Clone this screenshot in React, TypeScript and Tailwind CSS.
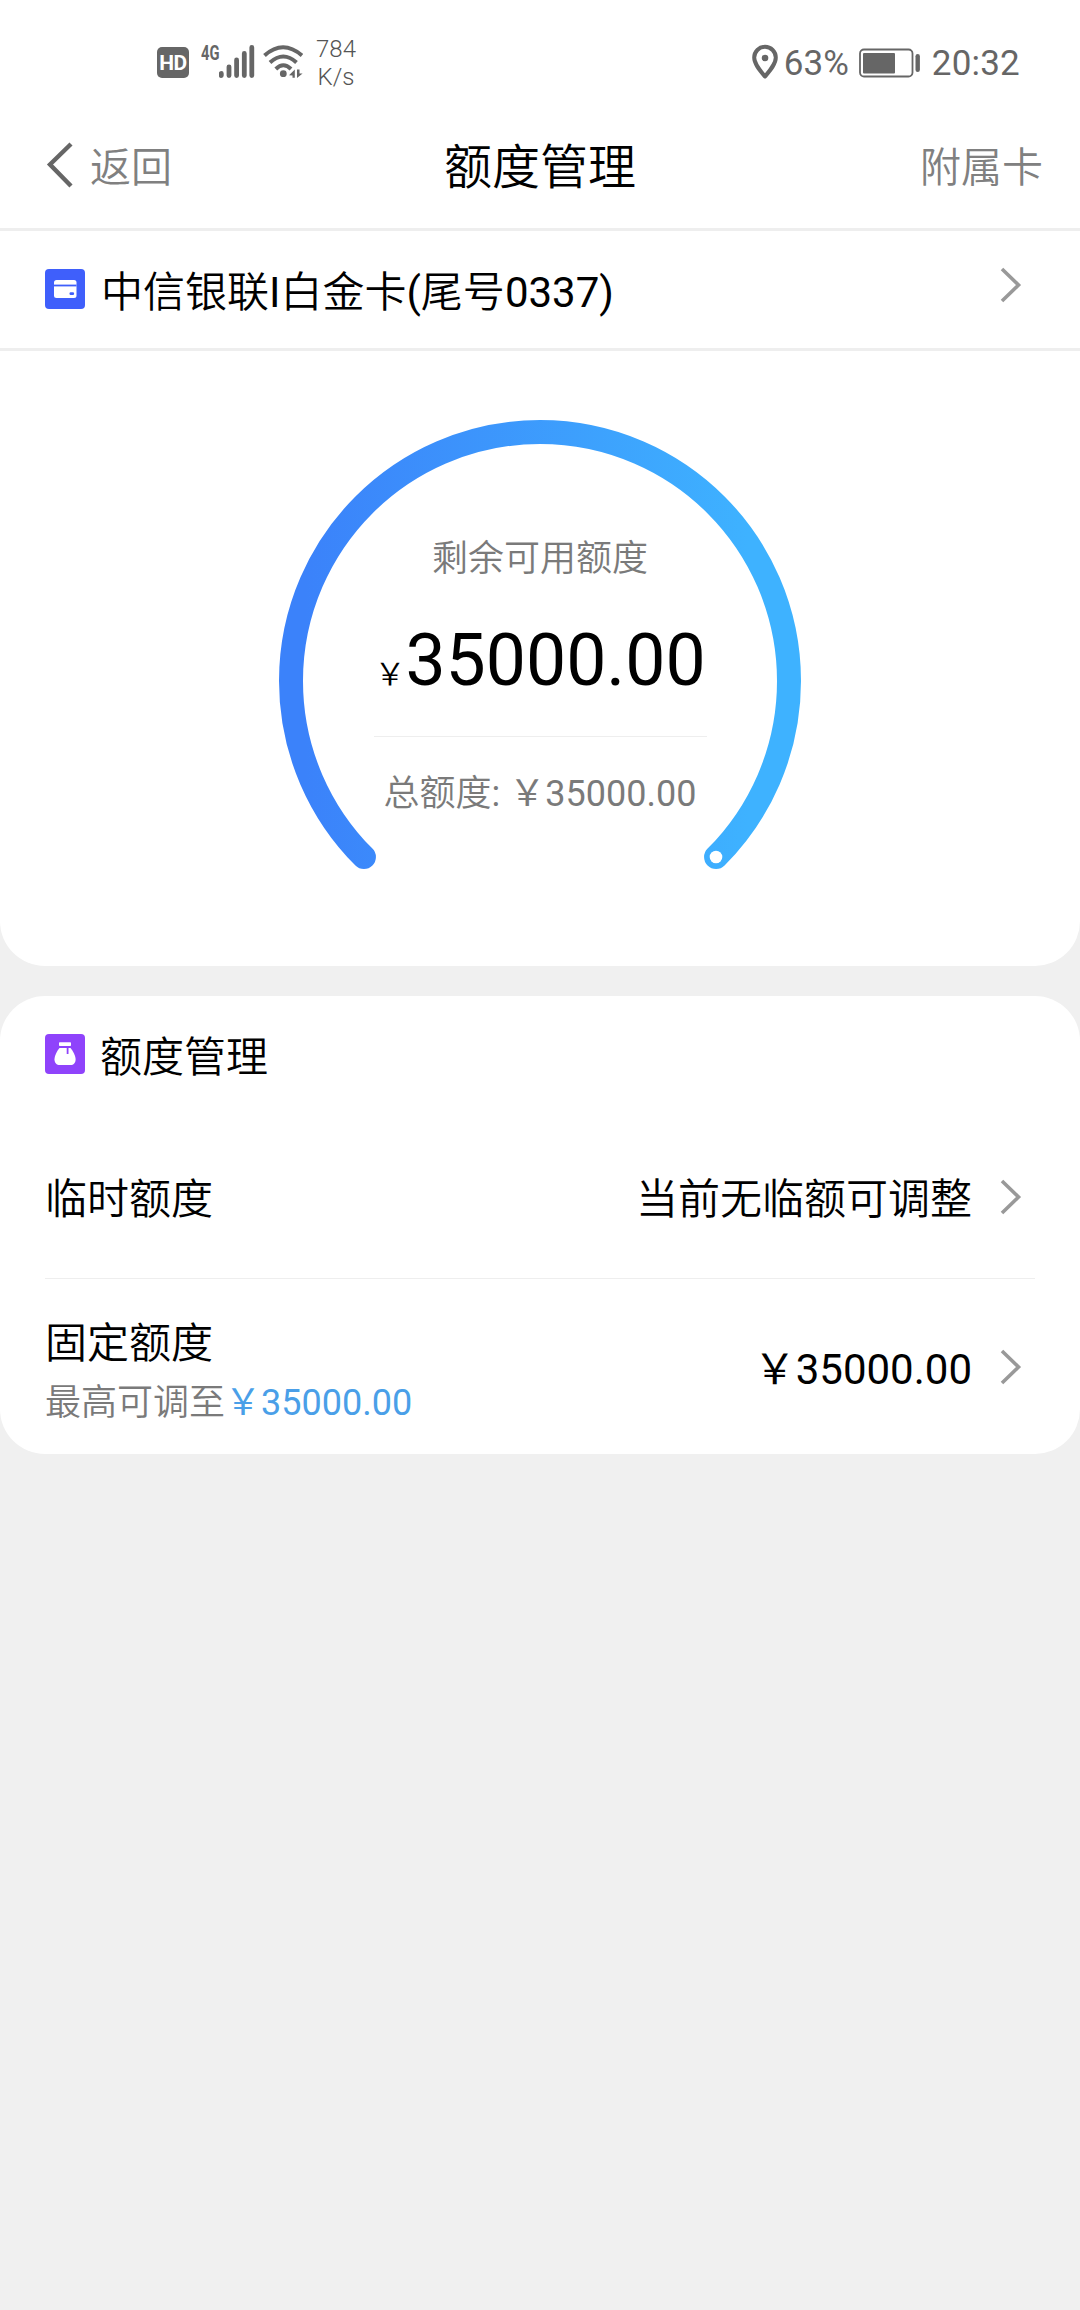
import React from "react";

const YEN = "\uffe5";

const ChevronRight = () => (
  <svg width="22" height="36" viewBox="0 0 22 36" fill="none" className="shrink-0">
    <path d="M2 2L18.5 18L2 34" stroke="#999999" strokeWidth="3.6" />
  </svg>
);

const StatusBar = () => {
  return (
    <div className="h-[104px] flex items-start text-[#666666]">
      {/* Network */}
      <div className="flex ml-[157px] mt-[44px]">
        <div className="mt-[3px] w-8 h-[31px] rounded-[5px] bg-[#666666] text-white text-[21px] leading-[32px] font-bold text-center tracking-[-0.5px]">
          HD
        </div>
        <div className="ml-3 w-[18px] text-[21px] leading-[18px] font-bold">
          <span className="inline-block origin-left scale-x-[0.7]">4G</span>
        </div>
        <svg width="36" height="36" viewBox="0 0 36 36" className="shrink-0">
          <g stroke="#666666" strokeWidth="4.8" strokeLinecap="round">
            <path d="M2.3 29.5V31.6M10 22.8V31.6M17.6 16V31.6M25.3 9.5V31.6M32.8 3.5V31.6" />
          </g>
        </svg>
        <svg width="40" height="36" viewBox="0 0 40 36" fill="none" className="ml-2 shrink-0">
          <g stroke="#666666" strokeWidth="4">
            <path d="M1.5 11.5Q20 -5 39 11.5" />
            <path d="M7 18.5Q20.3 6.5 33.5 18.5" />
            <path d="M12.8 25Q20.3 17.5 28 25" />
          </g>
          <circle cx="20.3" cy="29.7" r="3.4" fill="#666666" />
          <path d="M31.8 25.5V33.8H29.5V31.5L26 31.2Z M34 25.5V34L39.6 29.5H36.5V25.5Z" fill="#666666" />
        </svg>
      </div>
      <div className="ml-[13px] mt-[35px] text-[24px] leading-7 text-center font-light text-[#555555]">
        <div>784</div>
        <div>K/s</div>
      </div>

      {/* Location, battery, clock */}
      <div className="ml-auto mr-[60px] mt-[44px] flex items-center h-10 text-[35px] leading-10">
        <svg width="28" height="36" viewBox="0 0 28 36" fill="none" className="-mt-[4px]">
          <path
            d="M14 32.5C9 26.5 3.2 20 3.2 13.6A10.8 10.8 0 0 1 24.8 13.6C24.8 20 19 26.5 14 32.5Z"
            stroke="#666666"
            strokeWidth="4"
            strokeLinejoin="round"
          />
          <circle cx="14" cy="14" r="3.3" fill="#666666" />
        </svg>
        <span className="ml-[5px]">63%</span>
        <svg width="62" height="30" viewBox="0 0 62 30" fill="none" className="ml-[10px] -mt-[2px]">
          <rect x="1" y="1.5" width="52.5" height="27" rx="4" stroke="#666666" strokeWidth="1.8" />
          <rect x="4" y="5" width="32" height="20.5" rx="1" fill="#666666" />
          <rect x="56.5" y="6" width="4.4" height="18" rx="2.2" fill="#666666" />
        </svg>
        <span className="ml-[11px] tracking-[0.2px]">20:32</span>
      </div>
    </div>
  );
};

const CardIcon = () => (
  <svg width="40" height="40" viewBox="0 0 40 40" className="-mt-[2px]">
    <rect width="40" height="40" rx="4" fill="#3f5ffb" />
    <rect x="9" y="11" width="22.5" height="18" rx="2.5" fill="#ffffff" />
    <rect x="9" y="15.6" width="22.5" height="1.8" fill="#3f5ffb" />
    <rect x="24.5" y="23.2" width="4.6" height="2.8" rx="1.2" fill="#3f5ffb" />
  </svg>
);

const PurseIcon = () => (
  <svg width="40" height="40" viewBox="0 0 40 40">
    <rect width="40" height="40" rx="4" fill="#8f43fb" />
    <rect x="14" y="8.2" width="12" height="3.8" rx="0.8" fill="#ffffff" />
    <path
      d="M14.5 14H25.5C28 17 30.6 21.5 30.6 25.5C30.6 29 28.5 31 25.5 31H14.8C11.6 31 9.5 29 9.5 25.5C9.5 21.5 12 17 14.5 14Z"
      fill="#ffffff"
    />
    <path d="M22.6 13V20" stroke="#8f43fb" strokeWidth="1.8" />
  </svg>
);

const Gauge = () => {
  return (
    <div className="relative w-[522px] h-[456px] mx-auto">
      <svg width="522" height="456" viewBox="0 0 522 456" fill="none">
        <defs>
          <linearGradient id="ring" gradientUnits="userSpaceOnUse" x1="0" y1="0" x2="522" y2="0">
            <stop offset="0.05" stopColor="#3b82fa" />
            <stop offset="0.9" stopColor="#3eb2ff" />
          </linearGradient>
        </defs>
        <path
          d="M84.93 437.07A249 249 0 1 1 437.07 437.07"
          stroke="url(#ring)"
          strokeWidth="24"
          strokeLinecap="round"
        />
        <circle cx="437" cy="437" r="6.3" fill="#ffffff" />
      </svg>

      {/* Amounts inside the ring */}
      <div className="absolute inset-0 flex flex-col items-center">
        <div className="mt-[119px] text-[36px] leading-10 text-[#7a7a7a] font-[350]">剩余可用额度</div>
        <div className="mt-[42px] h-20 flex items-baseline text-black">
          <span className="text-[31px] font-[350]">{YEN}</span>
          <span className="text-[71.5px] leading-20">35000.00</span>
        </div>
        <div className="mt-[35px] w-[333px] h-px bg-[#eeeeee]" />
        <div className="mt-[37px] text-[36px] leading-10 text-[#7a7a7a] whitespace-pre">
          <span className="font-[350]">总额度</span>: {YEN}35000.00
        </div>
      </div>
    </div>
  );
};

const App = () => {
  return (
    <div className="w-[1080px] h-[2310px] bg-[#f0f0f0] font-['Roboto','Noto_Sans_CJK_SC',sans-serif] text-black">
      <div className="h-[966px] bg-white rounded-b-[45px]">
        <StatusBar />

        {/* Header */}
        <div className="h-[127px] flex items-center border-b-3 border-[#eeeeee] pl-[45px] pr-[37px] font-[350]">
          <div className="flex-1 flex items-center text-[41px] leading-none text-[#808080]">
            <svg width="30" height="46" viewBox="0 0 30 46" fill="none" className="mr-[15px] -mt-[2px]">
              <path d="M26 2L5 22.5L26 44" stroke="#666666" strokeWidth="4.4" />
            </svg>
            <span className="mt-[4px]">返回</span>
          </div>
          <div className="mt-[4px] mr-[8px] text-[48px] leading-none">额度管理</div>
          <div className="mt-[4px] flex-1 text-[41px] leading-none text-right text-[#808080]">附属卡</div>
        </div>

        {/* Card selector */}
        <div className="h-[120px] flex items-center border-b-3 border-[#eeeeee] pl-[45px] pr-[58px]">
          <CardIcon />
          <div className="ml-4 mt-[6px] text-[42px] leading-12">
            <span className="font-[350]">中信银联</span>I<span className="font-[350]">白金卡</span>(
            <span className="font-[350]">尾号</span>0337)
          </div>
          <div className="ml-auto -mt-[10px]">
            <ChevronRight />
          </div>
        </div>

        <div className="pt-[69px]">
          <Gauge />
        </div>
      </div>

      {/* Limit management */}
      <div className="mt-[30px] h-[458px] bg-white rounded-[45px] px-[45px]">
        <div className="flex items-center pt-[31px] h-[85px]">
          <PurseIcon />
          <div className="ml-[15px] mt-[8px] text-[42px] leading-12 font-[350]">额度管理</div>
        </div>
        <div className="h-[198px] pt-[40px] pr-[13px] flex items-center border-b border-[#eeeeee]">
          <div className="text-[42px] leading-12 font-[350]">临时额度</div>
          <div className="ml-auto text-[42px] leading-12 font-[350]">当前无临额可调整</div>
          <div className="ml-[28px] -mt-[6px]">
            <ChevronRight />
          </div>
        </div>
        <div className="flex items-start pr-[13px]">
          <div className="pt-[41px]">
            <div className="text-[42px] leading-12 font-[350]">固定额度</div>
            <div className="mt-[15px] text-[36px] leading-10 text-[#7a7a7a]">
              <span className="font-[350]">最高可调至</span>
              <span className="text-[#4a9fe8]">{YEN}35000.00</span>
            </div>
          </div>
          <div className="ml-auto mt-[67px] text-[42px] leading-12">{YEN}35000.00</div>
          <div className="ml-[28px] mt-[70px]">
            <ChevronRight />
          </div>
        </div>
      </div>
    </div>
  );
};

export default App;
